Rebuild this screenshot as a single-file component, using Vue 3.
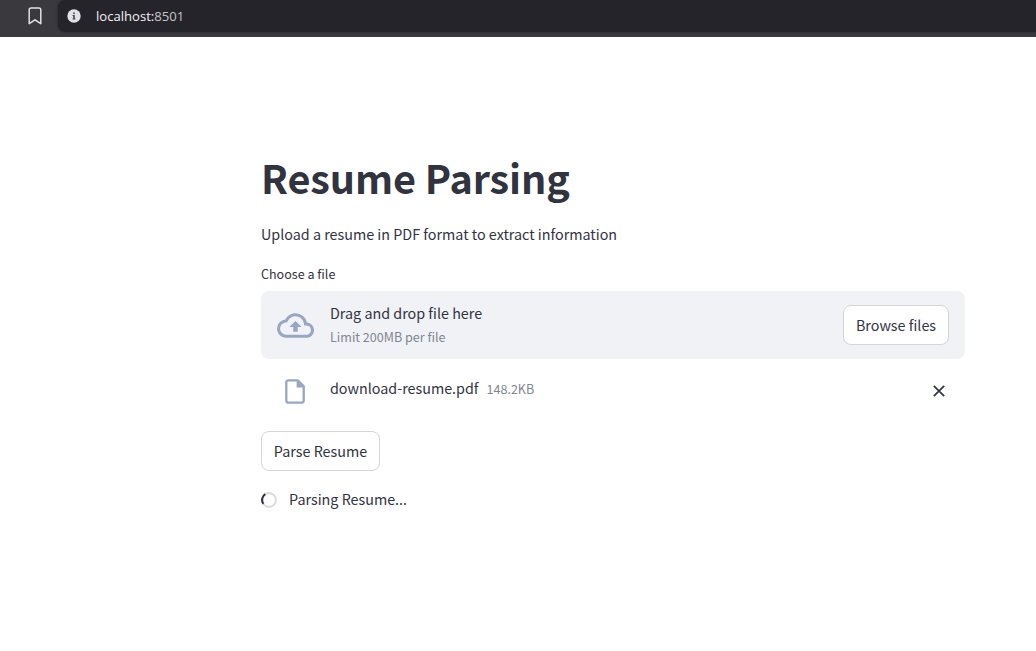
<script setup>
const file = { name: 'download-resume.pdf', size: '148.2KB' }
</script>

<template>
  <div class="window">
    <header class="toolbar">
      <svg class="bookmark" viewBox="0 0 14 18"><path d="M1.2 2.8q0-1.9 1.9-1.9h7.8q1.9 0 1.9 1.9V16.7L7 12.8 1.2 16.7z" /></svg>
      <div class="address">
        <svg class="info" viewBox="0 0 14 14"><circle cx="7" cy="7" r="6.7" /><path d="M6.2 3.4h1.6v1.5H6.2zM5.6 6h2.2v3.6h.6v1H5.6v-1h.6V7h-.6z" /></svg>
        <span class="url">localhost:<span class="port">8501</span></span>
      </div>
    </header>
    <main class="content">
      <h1>Resume Parsing</h1>
      <p class="intro">Upload a resume in PDF format to extract information</p>
      <label class="label">Choose a file</label>
      <section class="dropzone">
        <svg class="cloud" viewBox="0 0 24 24"><path d="M19.35 10.04A7.49 7.49 0 0012 4C9.11 4 6.6 5.64 5.35 8.04A5.994 5.994 0 000 14c0 3.31 2.69 6 6 6h13c2.76 0 5-2.24 5-5 0-2.64-2.05-4.78-4.65-4.96zM19 18H6c-2.21 0-4-1.79-4-4 0-2.05 1.53-3.76 3.56-3.97l1.07-.11.5-.95A5.469 5.469 0 0112 6c2.62 0 4.88 1.86 5.39 4.43l.3 1.5 1.53.11A2.98 2.98 0 0122 15c0 1.65-1.35 3-3 3zM8 13h2.55v3h2.9v-3H16l-4-4z" /></svg>
        <div class="hint">
          <span class="hint-main">Drag and drop file here</span>
          <span class="hint-limit">Limit 200MB per file</span>
        </div>
        <button class="btn browse">Browse files</button>
      </section>
      <div class="file">
        <svg class="doc" viewBox="0 0 20 25"><path class="sheet" d="M3.4 1.3h9.4L18.7 7.2V21.6q0 2.1-2.1 2.1H3.4q-2.1 0-2.1-2.1V3.4Q1.3 1.3 3.4 1.3z" /><path class="fold" d="M11.6 1.3V8.4h7.1z" /></svg>
        <span class="name">{{ file.name }}</span>
        <span class="size">{{ file.size }}</span>
        <svg class="close" viewBox="0 0 12 12"><path d="M.8.8l10.4 10.4M11.2.8L.8 11.2" /></svg>
      </div>
      <button class="btn parse">Parse Resume</button>
      <div class="status">
        <svg class="spinner" viewBox="0 0 16 16"><circle cx="8" cy="8" r="6.9" /><path d="M2.3 11.9A6.9 6.9 0 0 1 4.3 2.2" /></svg>
        <span class="status-text">Parsing Resume...</span>
      </div>
    </main>
  </div>
</template>

<style>
body {
  margin: 0;
  background: #fff;
}
</style>

<style scoped>
.window {
  height: 651px;
  overflow: hidden;
  background: #fff;
  color: #31333f;
  font-family: "Noto Sans CJK SC", "Noto Sans", sans-serif;
  font-size: 14.34px;
}
.toolbar {
  height: 37px;
  display: flex;
  align-items: flex-start;
  background: #3a393e;
}
.bookmark {
  width: 14px;
  height: 18px;
  margin: 7px 0 0 28px;
  fill: none;
  stroke: #e2e1e6;
  stroke-width: 1.5;
  stroke-linejoin: round;
}
.address {
  flex: 1;
  height: 32px;
  margin-left: 16px;
  display: flex;
  align-items: center;
  border-radius: 7px 0 0 7px;
  background: #25242a;
  box-shadow: 0 0 3px #2a292e;
}
.info {
  width: 14px;
  height: 14px;
  margin-left: 9px;
  fill: #e2e1e6;
}
.info path {
  fill: #45444a;
}
.url {
  margin-left: 15px;
  color: #f2f2f4;
  font: 13.1px/20px "Open Sans", "Noto Sans", sans-serif;
}
.port {
  color: #c6c5ca;
}
.content {
  width: 704px;
  margin-left: 261px;
  padding-top: 113px;
}
h1 {
  margin: 0;
  font-size: 39.6px;
  font-weight: 700;
  line-height: 53px;
  letter-spacing: -0.1px;
}
.intro {
  margin: 19px 0 0;
  line-height: 24px;
}
.label {
  display: block;
  margin-top: 18px;
  font-size: 12.56px;
  line-height: 20px;
}
.dropzone {
  box-sizing: border-box;
  height: 68px;
  margin-top: 7px;
  padding: 0 16px;
  display: flex;
  align-items: center;
  border-radius: 8px;
  background: #f0f2f6;
}
.cloud {
  width: 37px;
  height: 37px;
  fill: #97a6c3;
}
.hint {
  display: flex;
  flex-direction: column;
  margin-left: 16px;
}
.hint-main {
  margin-top: -1px;
  line-height: 24px;
}
.hint-limit {
  font-size: 12.56px;
  line-height: 23px;
  color: #808693;
}
.btn {
  box-sizing: border-box;
  height: 40px;
  padding: 0;
  border: 1px solid #d6d6d9;
  border-radius: 8px;
  background: #fff;
  color: #31333f;
  font: 14.34px/24px "Noto Sans CJK SC", "Noto Sans", sans-serif;
}
.browse {
  width: 106px;
  margin-left: auto;
}
.file {
  height: 24px;
  margin-top: 20px;
  padding: 0 20px 0 24px;
  display: flex;
  align-items: center;
}
.doc {
  width: 20px;
  height: 25px;
  margin: 1px 0 0 0.4px;
}
.sheet {
  fill: none;
  stroke: #97a6c3;
  stroke-width: 2.3;
}
.fold {
  fill: #97a6c3;
}
.name {
  margin: 0 0 7px 24.6px;
  line-height: 24px;
}
.size {
  margin: 0 0 5px 8px;
  font-size: 12.56px;
  line-height: 24px;
  color: #808693;
}
.close {
  width: 12px;
  height: 12px;
  margin-left: auto;
  stroke: #31333f;
  stroke-width: 1.7;
}
.parse {
  display: block;
  width: 119px;
  margin-top: 28px;
}
.status {
  height: 24px;
  margin-top: 17px;
  display: flex;
  align-items: center;
}
.spinner {
  width: 16px;
  height: 16px;
  fill: none;
  stroke: #dcdcde;
  stroke-width: 2.1;
}
.spinner path {
  stroke: #31333f;
}
.status-text {
  margin: 0 0 2px 12px;
  line-height: 24px;
}
</style>
